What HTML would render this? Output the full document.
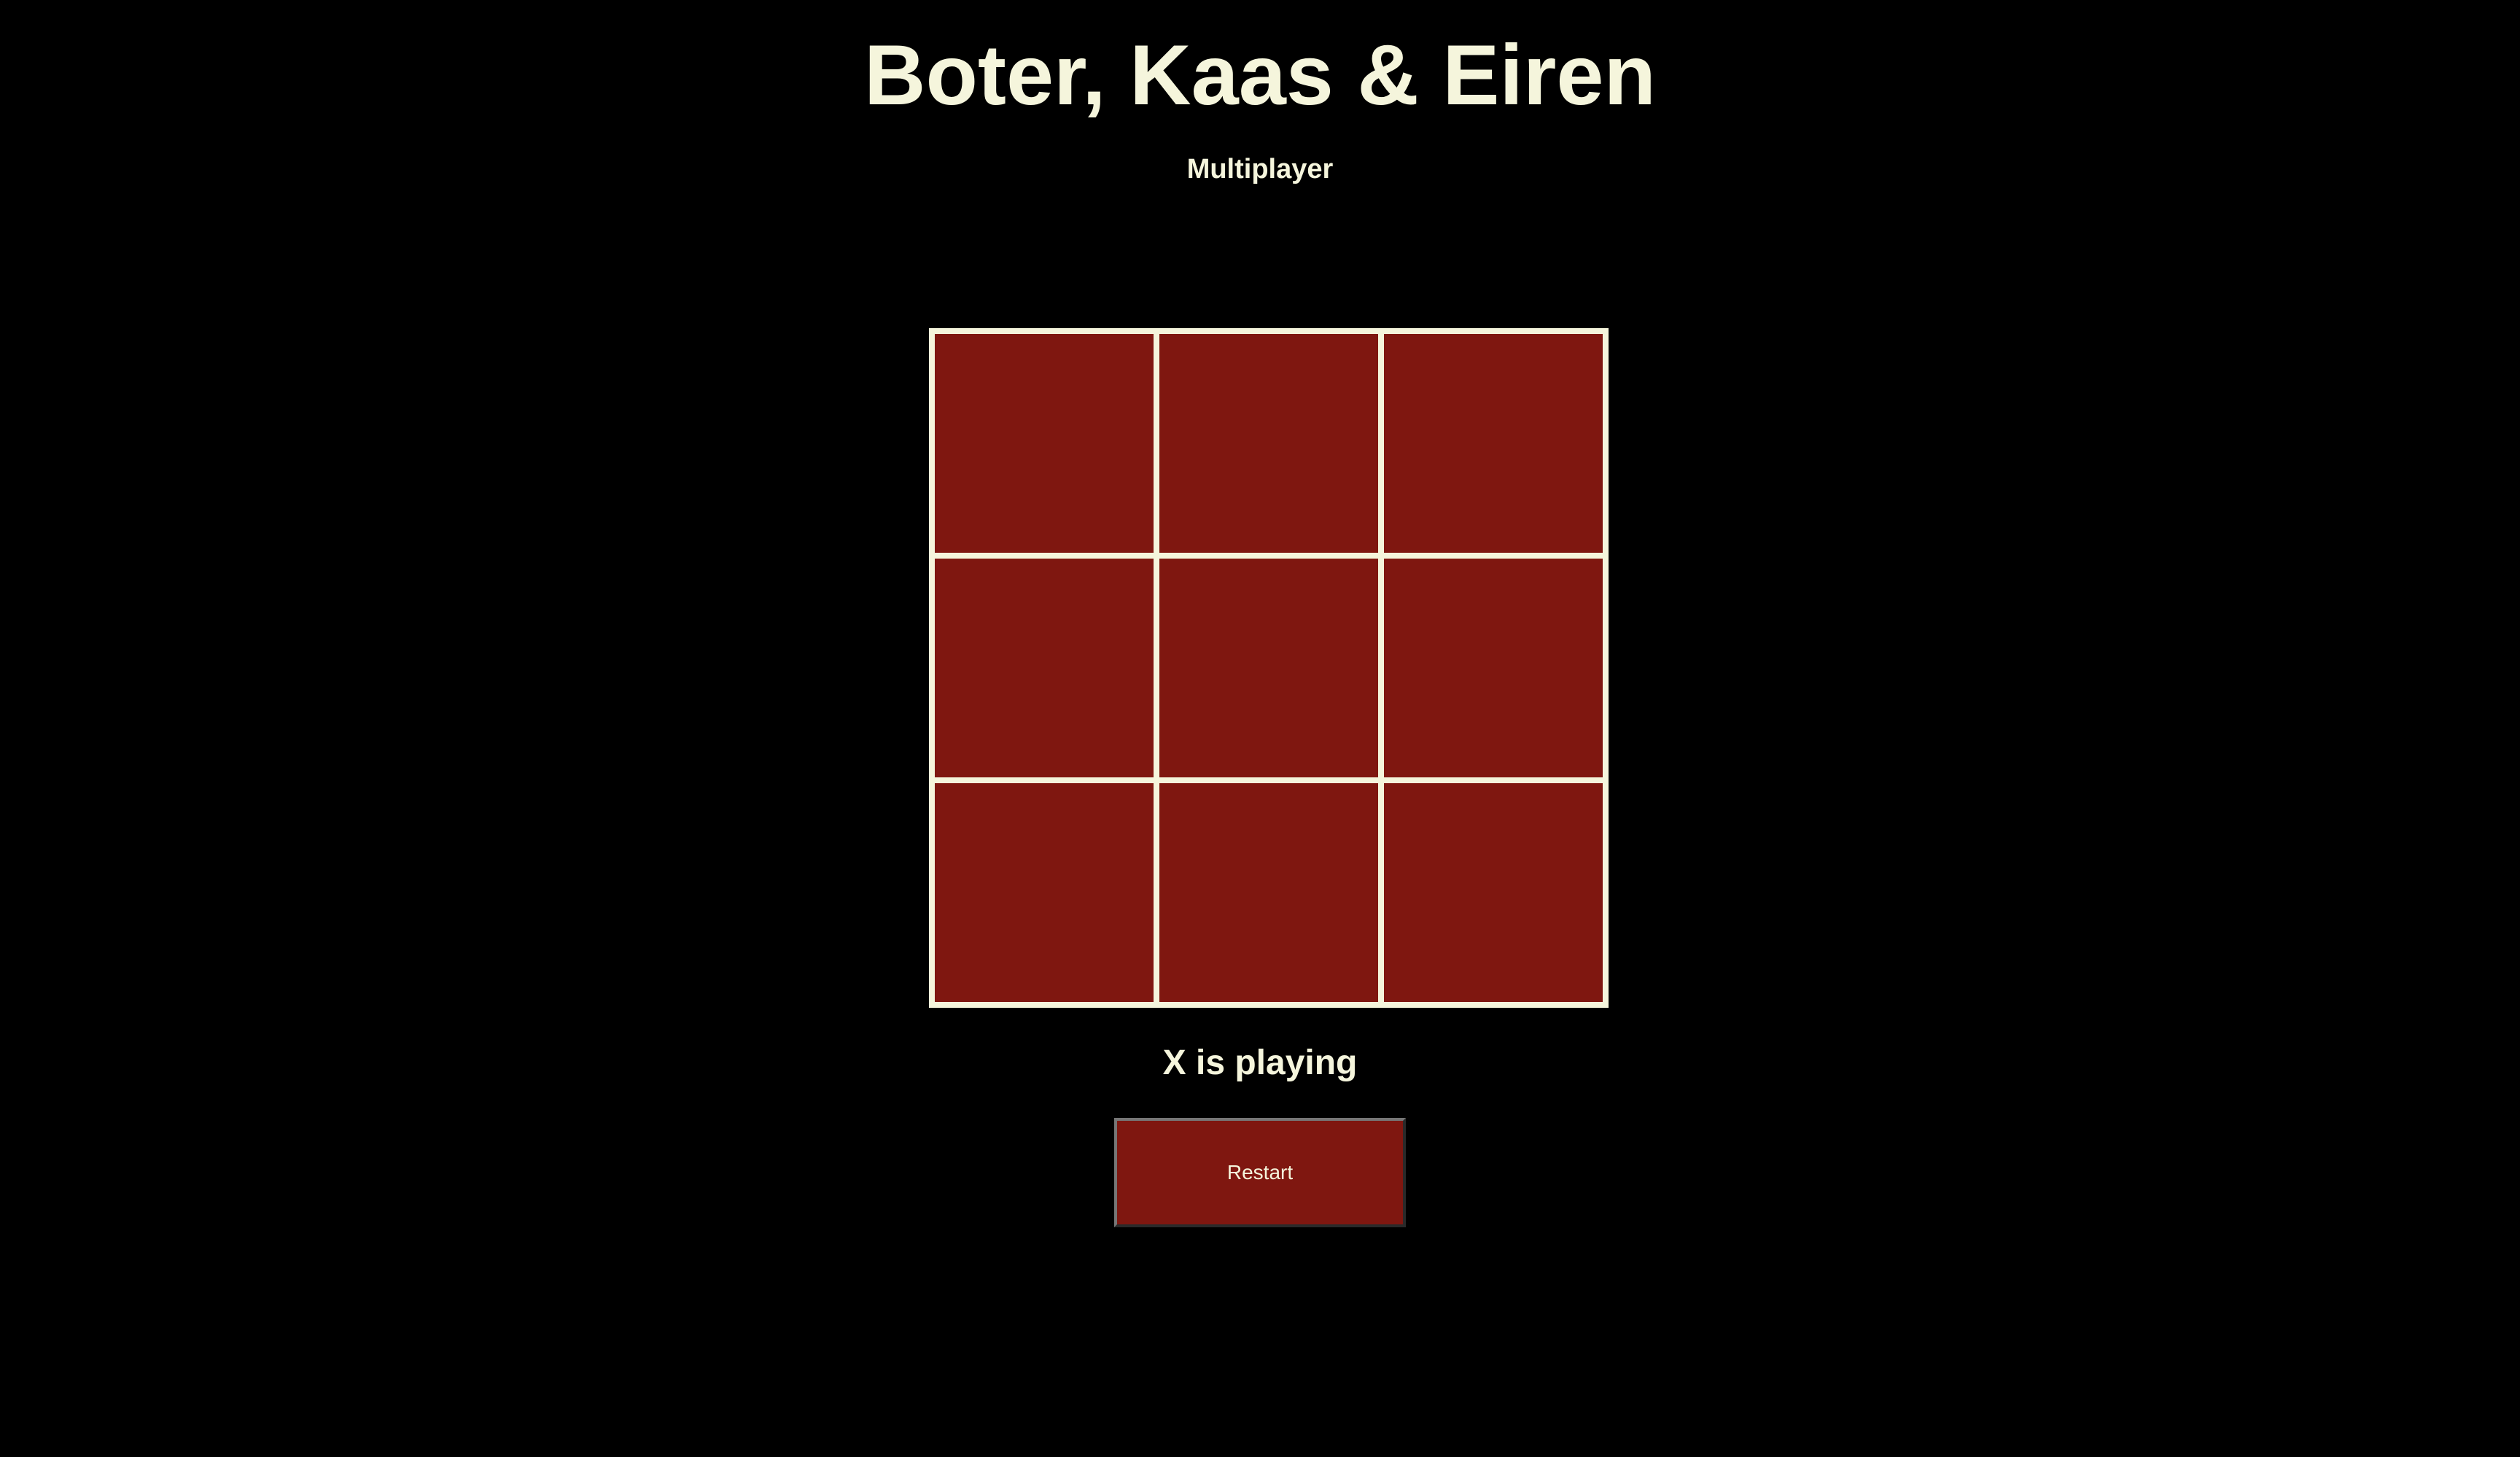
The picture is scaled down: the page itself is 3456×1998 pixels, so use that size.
<!DOCTYPE html>
<html><head><meta charset="utf-8"><style>
html,body{margin:0;padding:0;background:#000;width:3456px;height:1998px;overflow:hidden;font-family:"Liberation Sans",Arial,sans-serif;color:#f5f5dc}
.t{position:absolute;left:0;width:3456px;text-align:center;font-weight:bold;white-space:nowrap}
#h1{top:33px;font-size:117px;line-height:140px}
#sub{top:210px;font-size:38px;line-height:44px}
#board{position:absolute;left:1274px;top:450px;width:932px;height:932px;background:#f5f5dc}
.c{position:absolute;width:300px;height:300px;background:#7f1710}
#st{top:1428px;font-size:48px;line-height:60px}
#btn{position:absolute;left:1528px;top:1533px;width:392px;height:142px;background:#7f1710;border-style:solid;border-width:4px;border-color:#767676 #2a2a2a #2a2a2a #767676;font-size:28px;line-height:142px;text-align:center;font-weight:normal;color:#f5f5dc}
</style></head><body>
<div class="t" id="h1">Boter, Kaas &amp; Eiren</div>
<div class="t" id="sub">Multiplayer</div>
<div id="board">
<div class="c" style="left:8px;top:8px"></div>
<div class="c" style="left:316px;top:8px"></div>
<div class="c" style="left:624px;top:8px"></div>
<div class="c" style="left:8px;top:316px"></div>
<div class="c" style="left:316px;top:316px"></div>
<div class="c" style="left:624px;top:316px"></div>
<div class="c" style="left:8px;top:624px"></div>
<div class="c" style="left:316px;top:624px"></div>
<div class="c" style="left:624px;top:624px"></div>
</div>
<div class="t" id="st">X is playing</div>
<div id="btn">Restart</div>
</body></html>
